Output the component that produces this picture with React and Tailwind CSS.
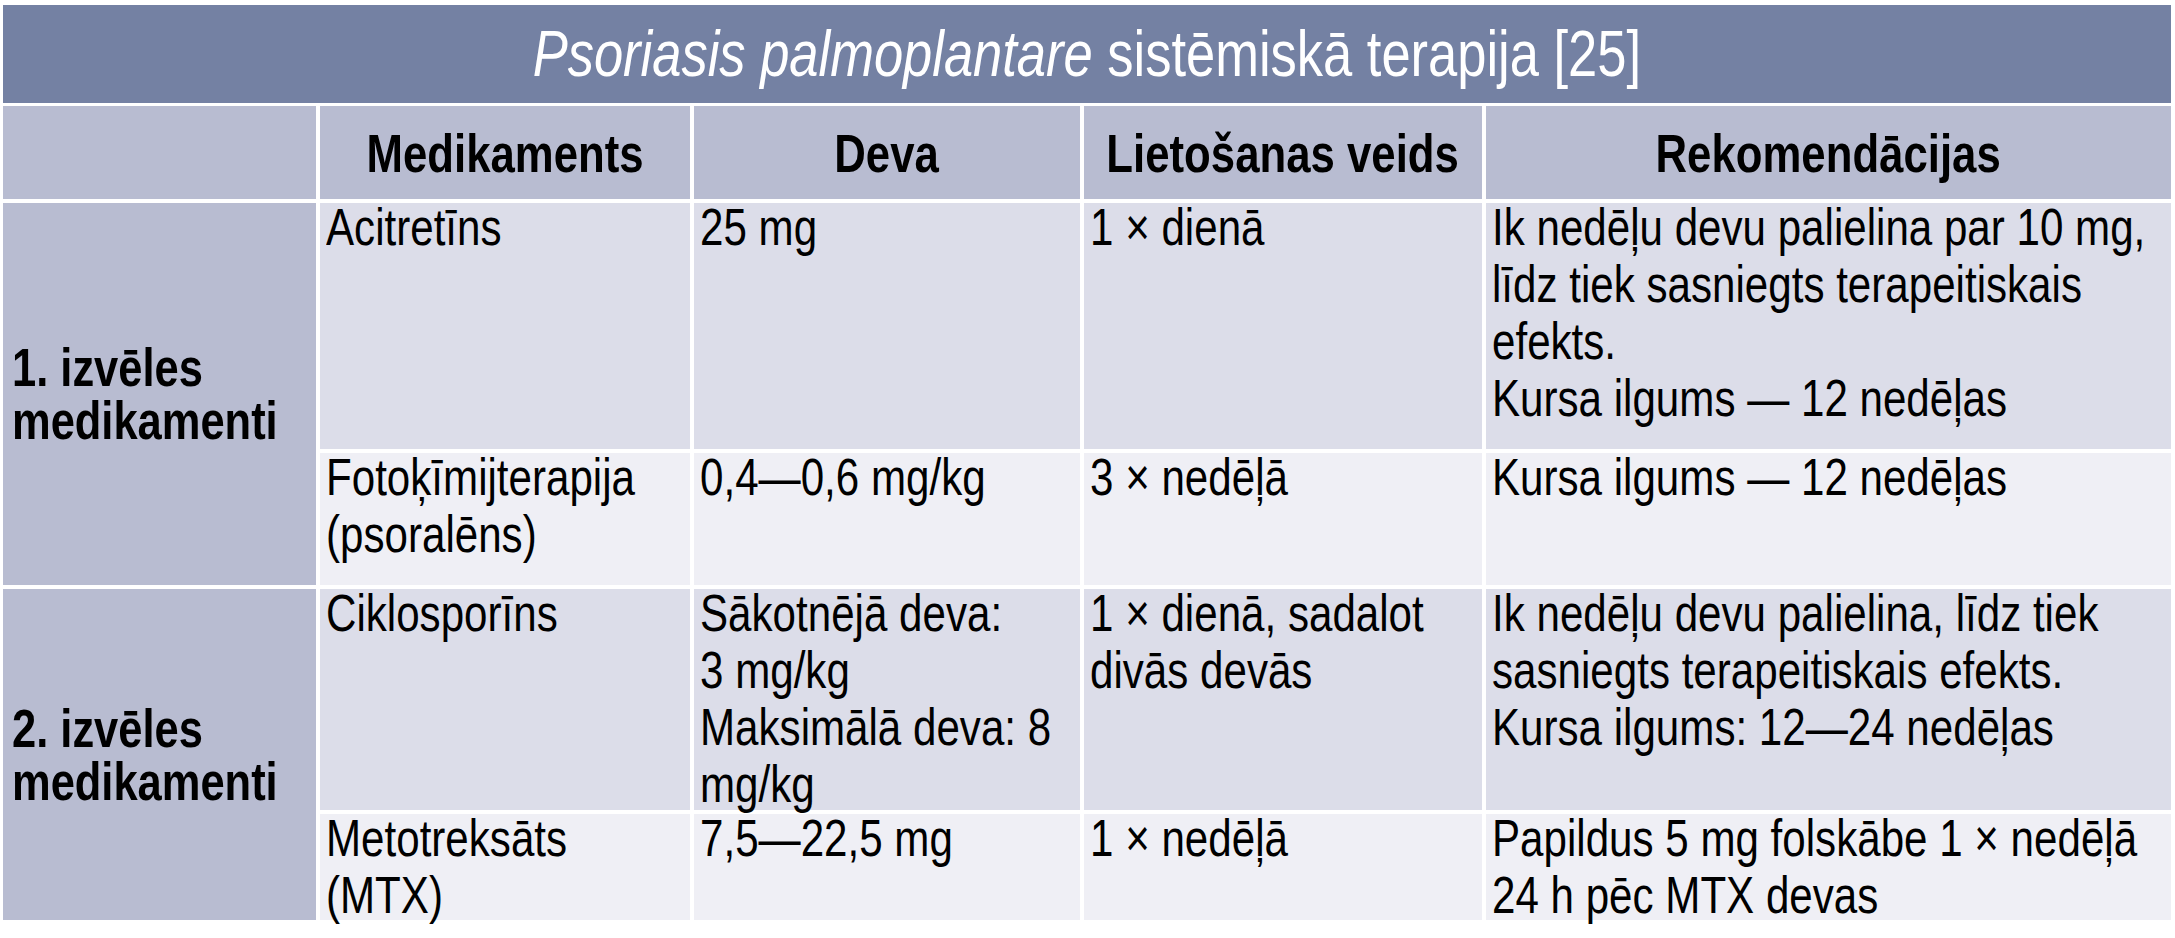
import React from 'react';

const FONT = "font-['Liberation_Sans',Arial,sans-serif]";

const groups = [
  {
    label: ['1. izvēles', 'medikamenti'],
    rows: [
      {
        tone: 'bg-[#dcdde9]',
        cells: [
          ['Acitretīns'],
          ['25 mg'],
          ['1 × dienā'],
          ['Ik nedēļu devu palielina par 10 mg,', 'līdz tiek sasniegts terapeitiskais', 'efekts.', 'Kursa ilgums — 12 nedēļas'],
        ],
      },
      {
        tone: 'bg-[#efeff5]',
        cells: [
          ['Fotoķīmijterapija', '(psoralēns)'],
          ['0,4—0,6 mg/kg'],
          ['3 × nedēļā'],
          ['Kursa ilgums — 12 nedēļas'],
        ],
      },
    ],
  },
  {
    label: ['2. izvēles', 'medikamenti'],
    rows: [
      {
        tone: 'bg-[#dcdde9]',
        cells: [
          ['Ciklosporīns'],
          ['Sākotnējā deva:', '3 mg/kg', 'Maksimālā deva: 8', 'mg/kg'],
          ['1 × dienā, sadalot', 'divās devās'],
          ['Ik nedēļu devu palielina, līdz tiek', 'sasniegts terapeitiskais efekts.', 'Kursa ilgums: 12—24 nedēļas'],
        ],
      },
      {
        tone: 'bg-[#efeff5]',
        cells: [
          ['Metotreksāts', '(MTX)'],
          ['7,5—22,5 mg'],
          ['1 × nedēļā'],
          ['Papildus 5 mg folskābe 1 × nedēļā', '24 h pēc MTX devas'],
        ],
      },
    ],
  },
];

const headers = ['Medikaments', 'Deva', 'Lietošanas veids', 'Rekomendācijas'];

// the source uses a condensed grotesque; Arial widths squeezed to ~81%
const Cell = ({ lines, tone }) => (
  <div className={`${tone} pl-[6px] text-[52px] leading-[57px] text-black whitespace-nowrap`}>
    <div className="-mt-1 w-[123%] scale-x-[0.81] origin-left">
      {lines.map((l, i) => (
        <div key={i}>{l}</div>
      ))}
    </div>
  </div>
);

export default function App() {
  return (
    <div className={`${FONT} bg-white min-h-screen overflow-hidden pt-[5px] pl-[3px]`}>
      <div className="w-[2168px]">
        <div className="h-[98px] bg-[#7481a3] flex items-center justify-center text-white text-[64px] leading-none mb-[3px] whitespace-nowrap">
          <span className="inline-block scale-x-[0.82]">
            <i>Psoriasis palmoplantare</i> sistēmiskā terapija [25]
          </span>
        </div>
        <div className="grid grid-cols-[313px_370px_386px_398px_685px] grid-rows-[93px_246px_132px_221px_106px] gap-[4px]">
          <div className="bg-[#b8bcd1]" />
          {headers.map((h) => (
            <div key={h} className="bg-[#b8bcd1] flex items-center justify-center font-bold text-[54px] leading-none text-black whitespace-nowrap">
              <span className="inline-block scale-x-[0.81]">{h}</span>
            </div>
          ))}
          {groups.map((g) => (
            <React.Fragment key={g.label[0]}>
              <div className="row-span-2 bg-[#b8bcd1] flex flex-col justify-center pl-[9px] font-bold text-[53px] leading-[53px] text-black whitespace-nowrap">
                <div className="w-[122%] scale-x-[0.82] origin-left">
                  {g.label.map((l) => (
                    <div key={l}>{l}</div>
                  ))}
                </div>
              </div>
              {g.rows.map((r, ri) =>
                r.cells.map((c, ci) => (
                  <Cell key={`${ri}-${ci}`} lines={c} tone={r.tone} />
                ))
              )}
            </React.Fragment>
          ))}
        </div>
      </div>
    </div>
  );
}
